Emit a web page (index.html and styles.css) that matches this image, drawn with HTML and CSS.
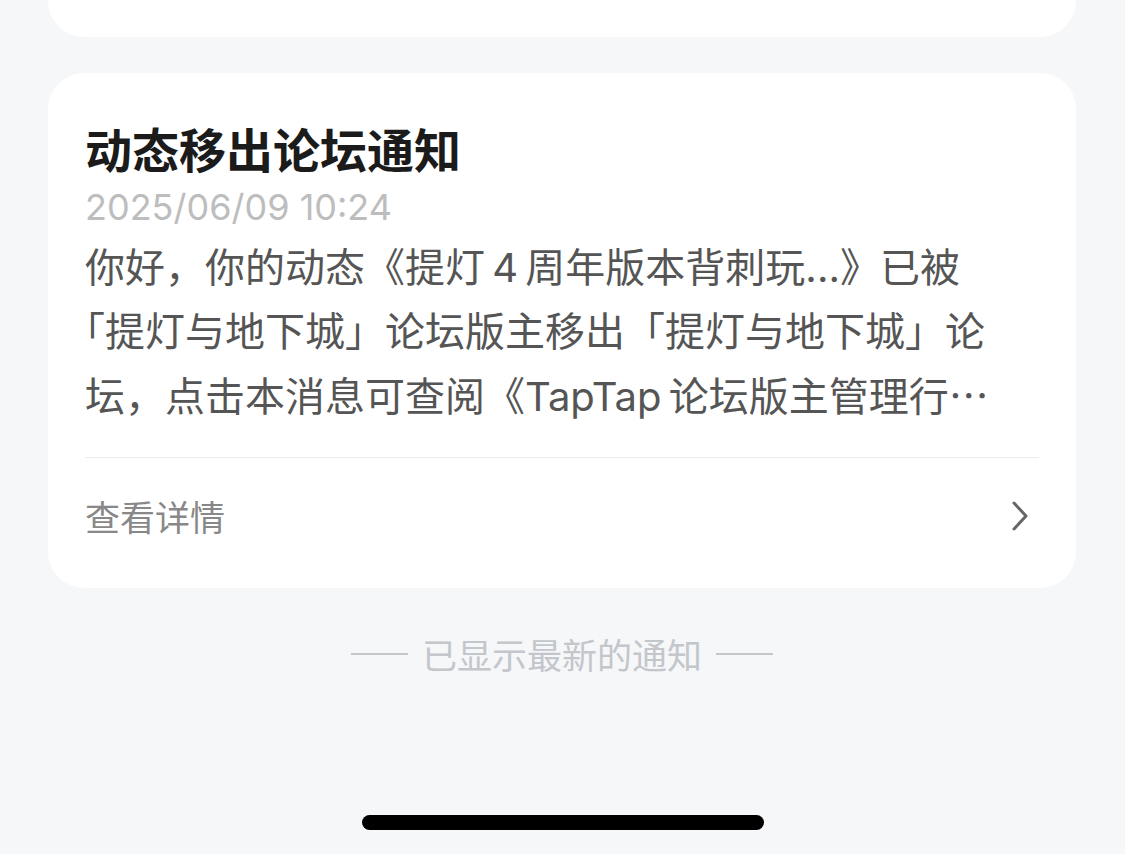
FILE: index.html
```html
<!DOCTYPE html>
<html lang="zh-CN">
<head>
    <meta charset="UTF-8">
    <meta name="viewport" content="width=device-width, initial-scale=1.0">
    <title>通知</title>
    <link rel="stylesheet" href="styles.css">
</head>
<body>
    <div class="list">
        <!-- previous notice, scrolled mostly out of view -->
        <div class="card card-prev"></div>

        <div class="card">
            <div class="notice-body">
                <h2 class="notice-title">动态移出论坛通知</h2>
                <p class="notice-time">2025/06/09 10:24</p>
                <div class="notice-text">
                    <p class="line">你好，你的动态《提灯&#8201;4&#8201;周年版本背刺玩...》已被</p>
                    <p class="line"><span class="open-quote">「</span>提灯与地下城」论坛版主移出「提灯与地下城」论</p>
                    <p class="line">坛，点击本消息可查阅《TapTap&#8201;论坛版主管理行<span class="dots">…</span></p>
                </div>
            </div>
            <div class="notice-link">
                <span>查看详情</span>
                <svg class="chevron" width="20" height="32" viewBox="0 0 20 32">
                    <polyline points="4,3 16,16 4,29" fill="none" stroke="#666" stroke-width="3" stroke-linecap="round" stroke-linejoin="round"/>
                </svg>
            </div>
        </div>

        <div class="end-tip">
            <span class="dash"></span>
            <span>已显示最新的通知</span>
            <span class="dash"></span>
        </div>
    </div>

    <div class="home-bar"></div>
</body>
</html>
```

FILE: styles.css
```css
body {
    margin: 0;
    background-color: #f6f7f9;
    font-family: Inter, "Noto Sans CJK SC", sans-serif;
    height: 854px;
    overflow: hidden;
}
.list {
    padding: 0 49px 0 48px;
}
.card {
    background: white;
    border-radius: 36px;
    margin-bottom: 36px;
}
.card-prev {
    height: 37px;
    border-radius: 0 0 36px 36px;
}
.notice-body {
    padding: 45px 37px 0 37px;
}
.notice-title {
    margin: 0;
    font-size: 47px;
    line-height: 60px;
    font-weight: bold;
    color: #1b1b1b;
    font-family: "Noto Sans CJK SC", sans-serif;
}
.notice-time {
    margin: 4px 0 0 0;
    font-size: 36px;
    line-height: 50px;
    color: #bdbdbd;
}
.notice-text {
    margin-top: 4px;
    padding-bottom: 28px;
    border-bottom: 1px solid #ececec;
}
.line {
    margin: 0;
    font-size: 40px;
    line-height: 63.5px;
    color: #555;
    white-space: nowrap;
}
/* quote at line start is set half width */
.open-quote {
    font-feature-settings: "halt";
}
.dots {
    font-family: "Noto Sans CJK SC", sans-serif;
    letter-spacing: 2px;
}
.notice-link {
    display: flex;
    align-items: center;
    justify-content: space-between;
    height: 116px;
    padding: 0 46px 14px 37px;
    font-size: 35px;
    color: #888;
    font-family: "Noto Sans CJK SC", sans-serif;
}
.end-tip {
    display: flex;
    align-items: center;
    justify-content: center;
    gap: 14px;
    margin-top: 46px;
    font-size: 35px;
    line-height: 40px;
    color: #c3c6cb;
    font-family: "Noto Sans CJK SC", sans-serif;
}
.dash {
    width: 57px;
    height: 2px;
    background: #c3c6cb;
}
.home-bar {
    position: fixed;
    left: 362px;
    bottom: 24px;
    width: 402px;
    height: 15px;
    border-radius: 8px;
    background: #000;
}
```
